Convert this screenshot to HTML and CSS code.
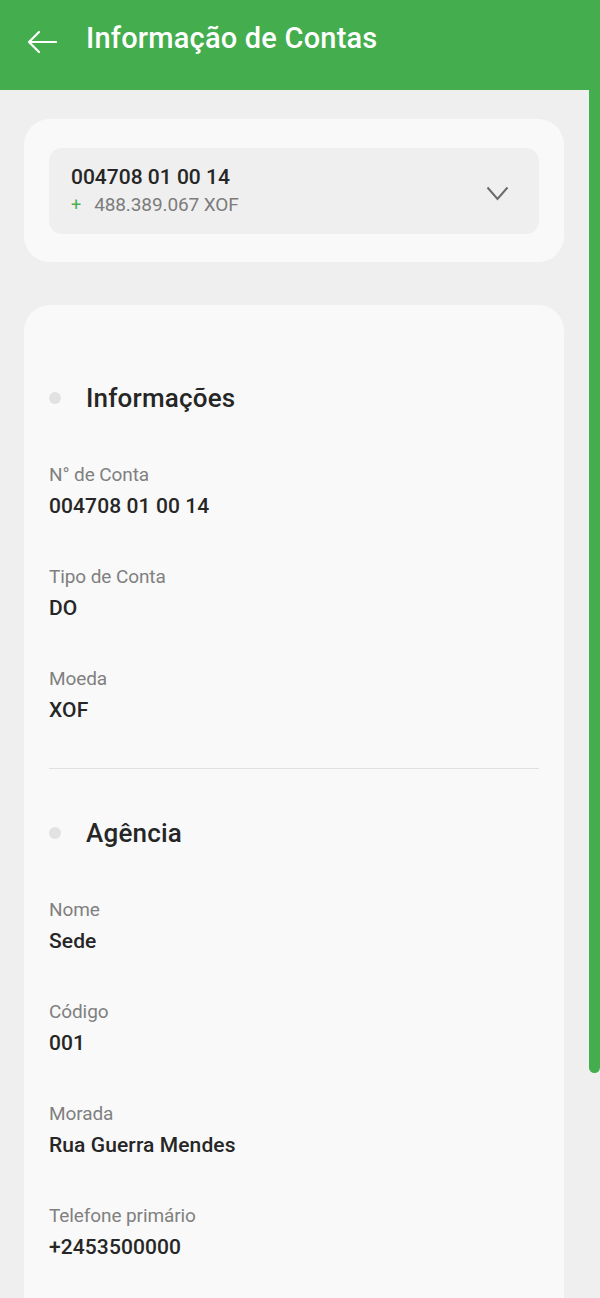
FILE: index.html
```html
<!DOCTYPE html>
<html lang="pt">
<head>
<meta charset="utf-8">
<title>Informação de Contas</title>
<link rel="stylesheet" href="styles.css">
</head>
<body>
<header class="topbar">
  <svg class="back" width="30" height="24" viewBox="0 0 30 24" aria-hidden="true">
    <path d="M29 12H2M12 2L2 12l10 10" fill="none" stroke="#fff" stroke-width="2.2" stroke-linecap="round" stroke-linejoin="round"/>
  </svg>
  <h1 class="title">Informação de Contas</h1>
</header>
<div class="page">
  <main class="content">
    <section class="card card-select">
      <div class="select">
        <div class="select-text">
          <div class="acct">004708 01 00 14</div>
          <div class="balance"><span class="plus">+</span>488.389.067 XOF</div>
        </div>
        <svg class="chev" width="23" height="15" viewBox="0 0 23 15" aria-hidden="true">
          <path d="M1.5 1.5L11.5 13L21.5 1.5" fill="none" stroke="#6b6b6b" stroke-width="2"/>
        </svg>
      </div>
    </section>
    <section class="card card-info">
      <div class="section-title"><span class="dot"></span>Informações</div>
      <div class="fields">
        <div class="field"><div class="label">N° de Conta</div><div class="value">004708 01 00 14</div></div>
        <div class="field"><div class="label">Tipo de Conta</div><div class="value">DO</div></div>
        <div class="field"><div class="label">Moeda</div><div class="value">XOF</div></div>
      </div>
      <hr class="divider">
      <div class="section-title"><span class="dot"></span>Agência</div>
      <div class="fields">
        <div class="field"><div class="label">Nome</div><div class="value">Sede</div></div>
        <div class="field"><div class="label">Código</div><div class="value">001</div></div>
        <div class="field"><div class="label">Morada</div><div class="value">Rua Guerra Mendes</div></div>
        <div class="field"><div class="label">Telefone primário</div><div class="value">+2453500000</div></div>
      </div>
    </section>
  </main>
  <div class="scrollbar"><div class="thumb"></div></div>
</div>
</body>
</html>
```
FILE: styles.css
```css
* { box-sizing: border-box; }
html, body { margin: 0; padding: 0; }
body {
  background: #efefef;
  font-family: Roboto, "Noto Sans", "Liberation Sans", sans-serif;
  color: #2b2b2b;
  height: 1298px;
  overflow: hidden;
}
.topbar {
  height: 90px;
  background: #44ad4d;
  display: flex;
  align-items: flex-start;
  padding: 18px 0 0 27px;
}
.back { margin-top: 12px; flex: none; }
.title {
  margin: 0 0 0 29px;
  color: #fff;
  font-size: 29px;
  font-weight: 500;
  line-height: 40px;
  letter-spacing: 0.2px;
}
.page { display: flex; height: 1208px; }
.content {
  width: 589px;
  padding: 29px 25px 0 24px;
  display: flex;
  flex-direction: column;
}
.scrollbar { width: 11px; }
.thumb {
  height: 983px;
  background: #44ad4d;
  border-radius: 0 0 6px 6px;
}
.card {
  background: #f9f9f9;
  border-radius: 26px;
}
.card-select {
  padding: 29px 25px 28px 25px;
}
.select {
  height: 86px;
  background: #efefef;
  border-radius: 13px;
  display: flex;
  align-items: center;
  justify-content: space-between;
  padding: 0 30px 0 22px;
}
.acct {
  font-size: 21px;
  font-weight: 500;
  line-height: 28px;
  color: #262626;
}
.balance {
  font-size: 19px;
  line-height: 28px;
  color: #7c7c7c;
  letter-spacing: -0.1px;
}
.plus { color: #4caf50; margin-right: 13px; font-size: 18px; }
.chev { margin-top: 4px; }
.card-info {
  margin-top: 43px;
  flex: 1;
  padding: 73px 25px 0 25px;
  border-radius: 26px 26px 0 0;
}
.section-title {
  display: flex;
  align-items: center;
  font-size: 26px;
  font-weight: 500;
  line-height: 40px;
  color: #262626;
  margin-bottom: 42px;
  letter-spacing: 0.2px;
}
.dot {
  width: 12px;
  height: 12px;
  border-radius: 50%;
  background: #e2e2e2;
  margin-right: 25px;
}
.fields {
  display: flex;
  flex-direction: column;
  gap: 40px;
}
.label {
  font-size: 19px;
  line-height: 30px;
  color: #808080;
  letter-spacing: -0.1px;
}
.value {
  font-size: 21px;
  font-weight: 500;
  line-height: 32px;
  color: #262626;
  letter-spacing: 0.1px;
}
.divider {
  border: 0;
  height: 1px;
  background: #e0e0e0;
  margin: 42px 0 44px;
}
```
